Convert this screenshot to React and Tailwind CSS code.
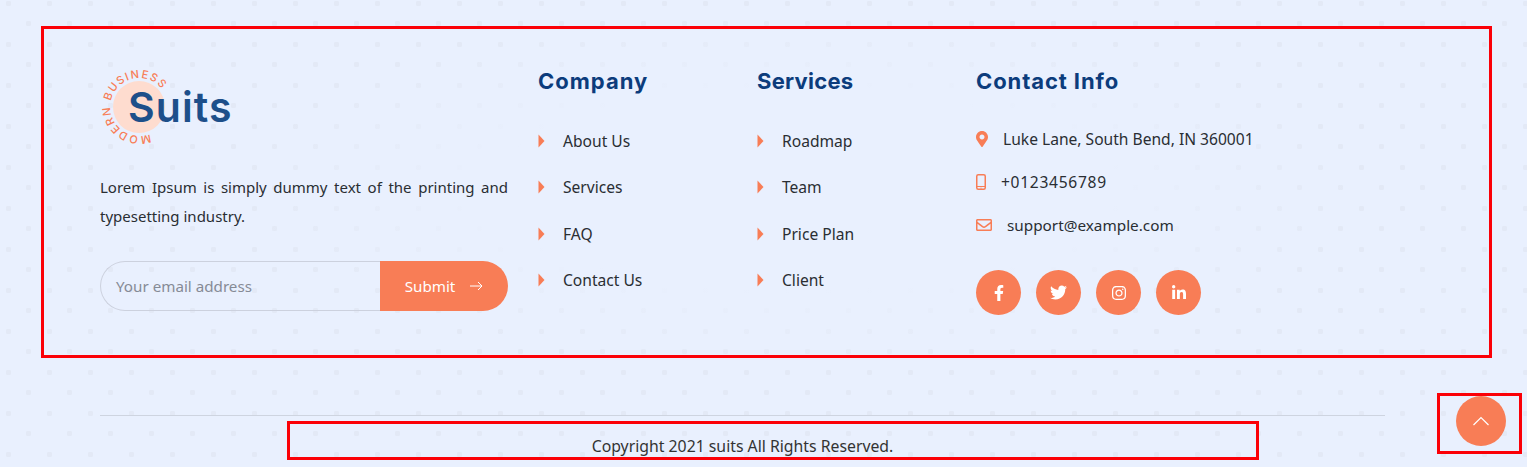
import React from "react";
import { FaMapMarkerAlt, FaRegEnvelope, FaFacebookF, FaTwitter, FaInstagram, FaLinkedinIn } from "react-icons/fa";

const body = "font-['Noto_Sans',sans-serif]";
const head = "font-['Inter',sans-serif]";

function Logo() {
  return (
    <div className="relative h-[80px] w-[140px]">
      <svg width="80" height="80" viewBox="0 0 80 80" className="absolute left-0 top-0">
        <circle cx="39" cy="41" r="26" fill="#fedccf" />
        <defs>
          <path id="ring" d="M 49.9 67.9 A 29 29 0 1 1 62 23" fill="none" />
        </defs>
        <text fill="#f87d56" fontSize="11" fontWeight="500" letterSpacing="1.5" fontFamily="Inter, sans-serif">
          <textPath href="#ring">MODERN BUSINESS</textPath>
        </text>
      </svg>
      <div className={`${head} absolute left-[28px] top-[15px] text-[41px] leading-[52px] font-semibold tracking-[1.1px] text-[#1d4f8a]`}>Suits</div>
    </div>
  );
}

function LinkColumn({ title, items, width, tracking }) {
  return (
    <div className={width}>
      <h3 className={`${head} ${tracking} text-[22px] leading-[30px] font-bold text-[#0c3c7c]`}>{title}</h3>
      <ul className="mt-[34px] flex flex-col gap-[24.4px]">
        {items.map((t) => (
          <li key={t} className="flex h-[22px] items-center">
            <svg width="7" height="14" viewBox="0 0 7 14" className="shrink-0 text-[#f87d56]" fill="currentColor">
              <path d="M0.5 0.5L6.5 7 0.5 13.5z" />
            </svg>
            <span className="ml-[18px] text-[15.6px] leading-[22px] text-[#2a2e33]">{t}</span>
          </li>
        ))}
      </ul>
    </div>
  );
}

function Social({ children }) {
  return <div className="flex h-[45px] w-[45px] items-center justify-center rounded-full bg-[#f87d56] text-white">{children}</div>;
}

export default function App() {
  return (
    <div className={`${body} relative h-[467px] overflow-hidden bg-[#e9f0fe]`}>
      <div className="pointer-events-none absolute inset-0 bg-[radial-gradient(ellipse_560px_180px_at_800px_190px,#e9f0fe_55%,transparent_100%),radial-gradient(circle_3px,#e3e9f6_90%,transparent_100%),radial-gradient(circle_3px,#e3e9f6_90%,transparent_100%)] bg-[length:100%_100%,41px_41px,41px_41px] bg-[position:0_0,-12px_-17px,8px_3px]" />

      <div className="relative flex px-[100px] pt-[66px]">
        <div className="mr-[30px] w-[408px]">
          <Logo />
          <p className="mt-[27px] text-justify text-[15px] leading-[29px] text-[#2a2e33]">
            Lorem Ipsum is simply dummy text of the printing and typesetting industry.
          </p>
          <form className="mt-[30px] flex h-[50px]">
            <div className="flex w-[280px] items-center rounded-l-full border border-r-0 border-[#ccd1de] pl-[15px] text-[15.2px] text-[#868b96]">
              Your email address
            </div>
            <div className="flex w-[128px] items-center justify-center gap-[14px] rounded-r-full bg-[#f87d56] text-[15.2px] text-white">
              <span>Submit</span>
              <svg width="14" height="10" viewBox="0 0 14 10" fill="none" stroke="currentColor" strokeWidth="1">
                <path d="M1 5h12M9 1l4 4-4 4" />
              </svg>
            </div>
          </form>
        </div>

        <LinkColumn title="Company" width="w-[219px]" tracking="tracking-[1px]" items={["About Us", "Services", "FAQ", "Contact Us"]} />
        <LinkColumn title="Services" width="w-[219px]" tracking="tracking-[0.25px]" items={["Roadmap", "Team", "Price Plan", "Client"]} />

        <div className="flex-1">
          <h3 className={`${head} text-[22px] leading-[30px] font-bold tracking-[0.9px] text-[#0c3c7c]`}>Contact Info</h3>
          <ul className="mt-[32px] flex flex-col gap-[21px] text-[#2a2e33]">
            <li className="flex h-[22px] items-center">
              <FaMapMarkerAlt className="h-[16px] w-[12px] text-[#f87d56]" />
              <span className="ml-[15px] text-[15.6px] leading-[22px]">Luke Lane, South Bend, IN 360001</span>
            </li>
            <li className="flex h-[22px] items-center">
              <svg width="10" height="16" viewBox="0 0 10 16" className="text-[#f87d56]" fill="none" stroke="currentColor">
                <rect x="0.75" y="0.75" width="8.5" height="14.5" rx="1.5" strokeWidth="1.5" />
                <path d="M1 12.5h8" strokeWidth="1" />
                <circle cx="5" cy="14" r="0.6" fill="currentColor" stroke="none" />
              </svg>
              <span className="ml-[15px] text-[15.6px] leading-[22px] tracking-[0.7px]">+0123456789</span>
            </li>
            <li className="flex h-[22px] items-center">
              <FaRegEnvelope className="h-[16px] w-[16px] text-[#f87d56]" />
              <span className="ml-[15px] text-[15.3px] leading-[22px]">support@example.com</span>
            </li>
          </ul>
          <div className="mt-[34px] flex gap-[15px]">
            <Social><FaFacebookF className="h-[16px] w-[16px]" /></Social>
            <Social><FaTwitter className="h-[17px] w-[17px]" /></Social>
            <Social><FaInstagram className="h-[16px] w-[16px]" /></Social>
            <Social><FaLinkedinIn className="h-[16px] w-[16px]" /></Social>
          </div>
        </div>
      </div>

      <div className="relative mx-[100px] mt-[100px] w-[1285px] border-t border-[#ced4e0] pt-[19px] text-center text-[15.8px] leading-[22px] text-[#333]">
        Copyright 2021 suits All Rights Reserved.
      </div>

      <div className="absolute left-[1456px] top-[396px] flex h-[50px] w-[50px] items-center justify-center rounded-full bg-[#f87d56] text-white">
        <svg width="18" height="10" viewBox="0 0 18 10" fill="none" stroke="currentColor" strokeWidth="1.2">
          <path d="M1.5 9L9 1.5 16.5 9" />
        </svg>
      </div>

      <div className="pointer-events-none absolute left-[41px] top-[26px] h-[332px] w-[1451px] border-[3px] border-[#fb0007]" />
      <div className="pointer-events-none absolute left-[287px] top-[421px] h-[39px] w-[972px] border-[3px] border-[#fb0007]" />
      <div className="pointer-events-none absolute left-[1437px] top-[393px] h-[61px] w-[85px] border-[3px] border-[#fb0007]" />
    </div>
  );
}
